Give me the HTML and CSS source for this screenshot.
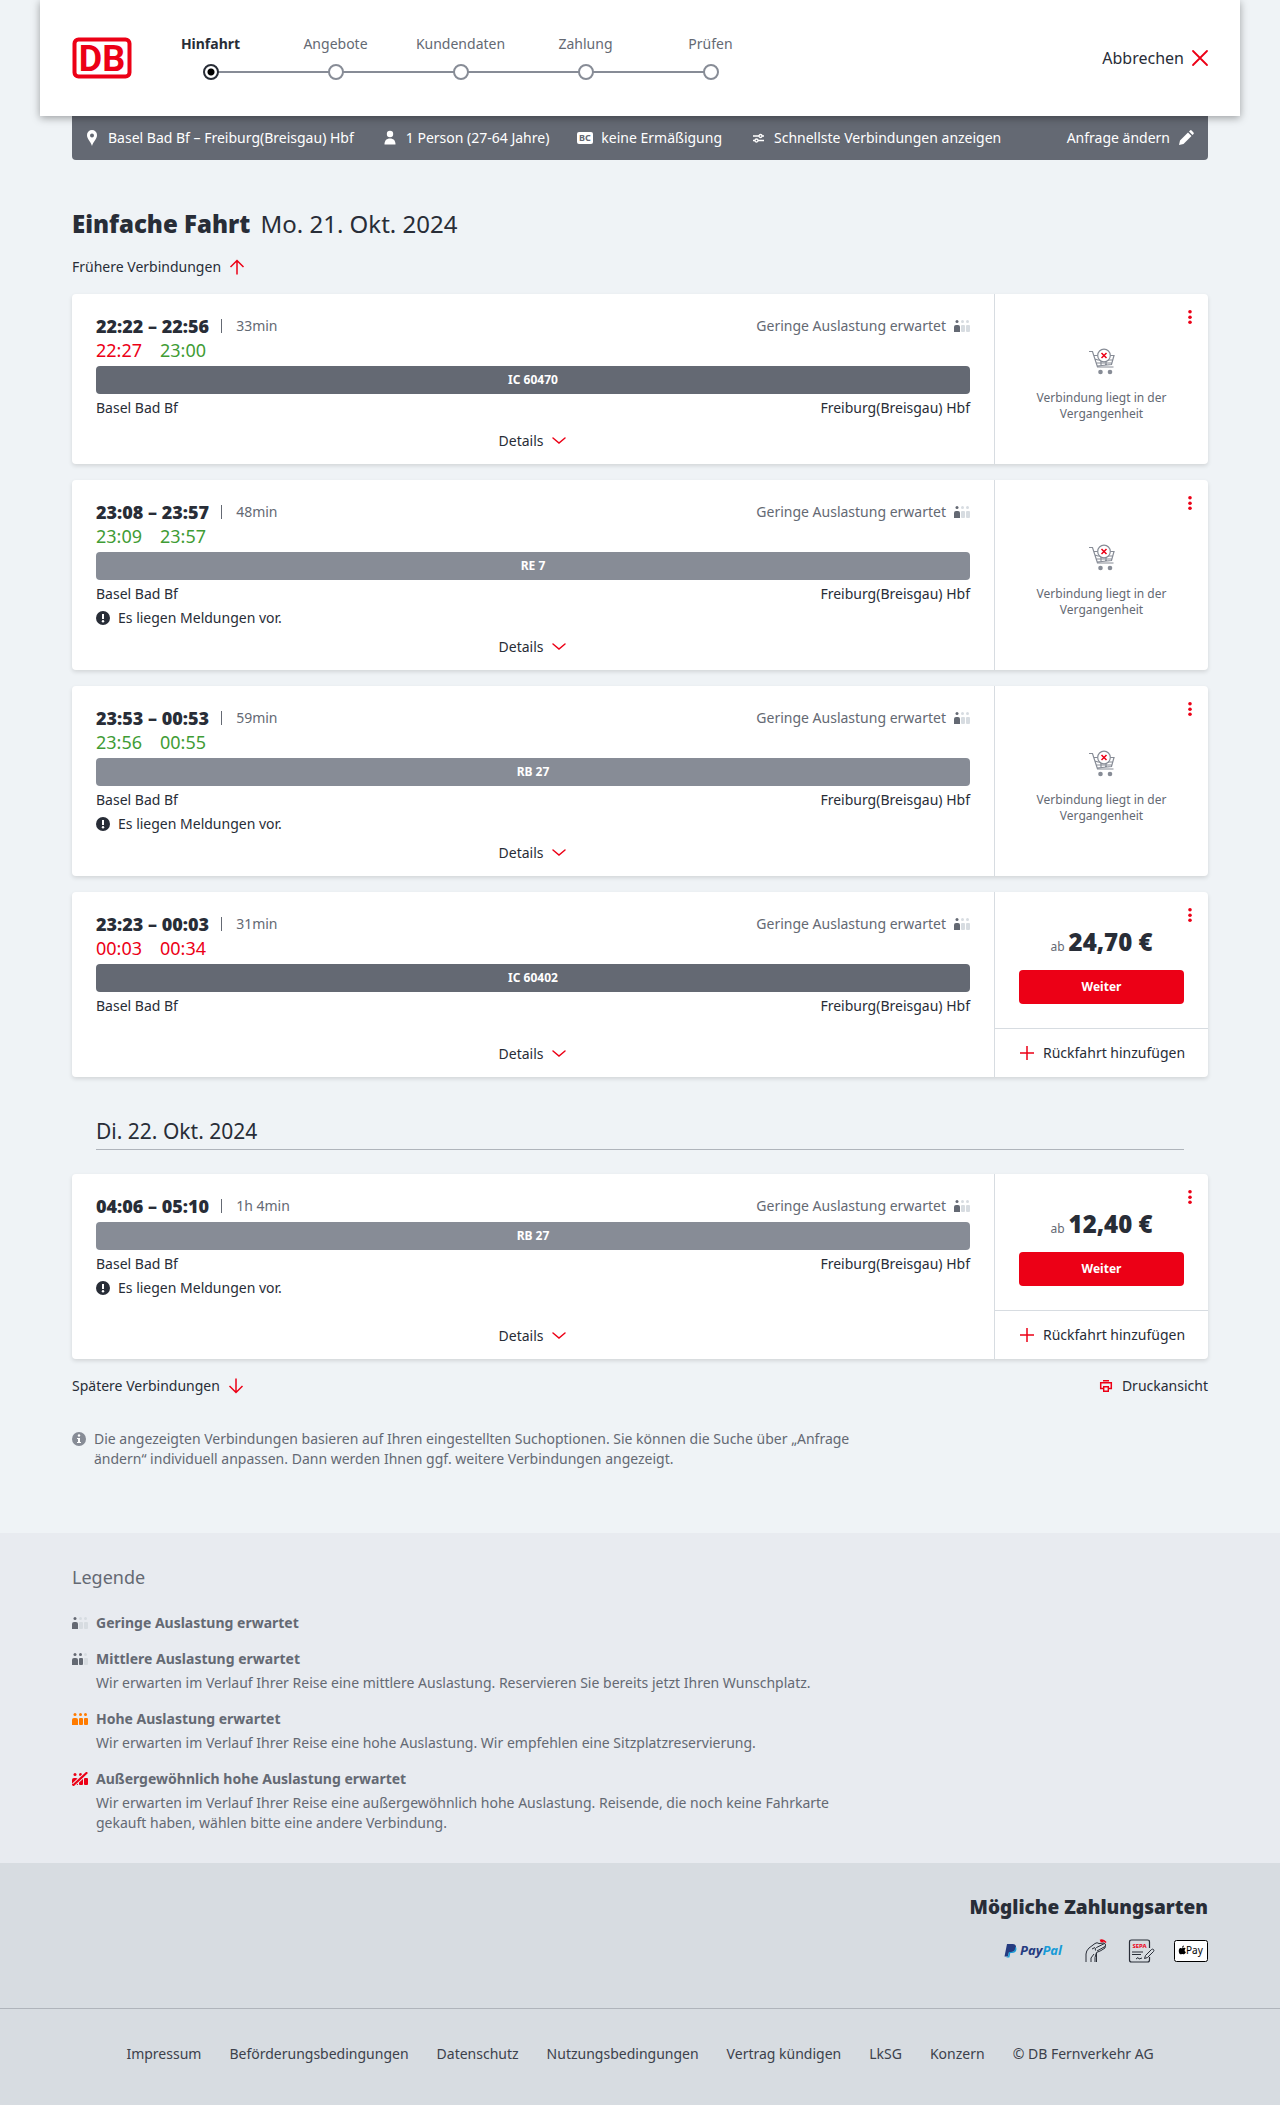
FILE: index.html
```
<!DOCTYPE html>
<html lang="de">
<head>
  <meta charset="UTF-8" />
  <meta name="viewport" content="width=device-width, initial-scale=1.0"/>
  <title>Hinfahrt auswählen</title>
  <link rel="stylesheet" href="styles.css">
</head>
<body>
  <!-- Icons -->
  <svg class="sprite" aria-hidden="true">
    <symbol id="load-low" viewBox="0 0 16 12">
      <g fill="#646973"><circle cx="3" cy="1.5" r="1.5"/><path d="M0 12V7q0-2 2-2h2q2 0 2 2v5z"/></g>
      <g fill="#d7dce1"><circle cx="8.5" cy="1.5" r="1.5"/><circle cx="13.5" cy="1.5" r="1.5"/><rect x="7" y="5" width="4" height="7" rx="1"/><rect x="12" y="5" width="4" height="7" rx="1"/></g>
    </symbol>
    <symbol id="load-mid" viewBox="0 0 16 12">
      <g fill="#646973"><circle cx="3" cy="1.5" r="1.5"/><circle cx="8.5" cy="1.5" r="1.5"/><path d="M0 12V7q0-2 2-2h2q2 0 2 2v5z"/><rect x="7" y="5" width="4" height="7" rx="1"/></g>
      <g fill="#d7dce1"><circle cx="13.5" cy="1.5" r="1.5"/><rect x="12" y="5" width="4" height="7" rx="1"/></g>
    </symbol>
    <symbol id="load-high" viewBox="0 0 16 12">
      <g fill="#ff7b00"><circle cx="3" cy="1.5" r="1.5"/><circle cx="8.5" cy="1.5" r="1.5"/><circle cx="13.5" cy="1.5" r="1.5"/><path d="M0 12V7q0-2 2-2h2q2 0 2 2v5z"/><rect x="7" y="5" width="4" height="7" rx="1"/><rect x="12" y="5" width="4" height="7" rx="1"/></g>
    </symbol>
    <symbol id="load-full" viewBox="0 0 16 14">
      <g fill="#ec0016"><circle cx="3" cy="2.5" r="1.5"/><circle cx="8.5" cy="2.5" r="1.5"/><path d="M0 13V8q0-2 2-2h2q2 0 2 2v5z"/><rect x="7" y="6" width="4" height="7" rx="1"/><rect x="12" y="6" width="4" height="7" rx="1"/></g>
      <path d="M1.500 13L14.500 1" stroke="#e8ebf0" stroke-width="4"/>
      <path d="M1.500 13L14.500 1" stroke="#ec0016" stroke-width="2.200" stroke-linecap="round"/>
    </symbol>
    <symbol id="chevron" viewBox="0 0 16 16"><path d="M2 5l6 5 6-5" fill="none" stroke="#ec0016" stroke-width="1.500" stroke-linecap="round"/></symbol>
    <symbol id="dots" viewBox="0 0 4 14"><g fill="#ec0016"><circle cx="2" cy="1.800" r="1.800"/><circle cx="2" cy="7.300" r="1.800"/><circle cx="2" cy="12.200" r="1.800"/></g></symbol>
    <symbol id="plus" viewBox="0 0 16 16"><path d="M8 1v14M1 8h14" stroke="#ec0016" stroke-width="1.500"/></symbol>
    <symbol id="notice" viewBox="0 0 14 14"><circle cx="7" cy="7" r="7" fill="#282d37"/><path d="M6 3h2v5h-2z" fill="#fff"/><circle cx="7" cy="10.300" r="1.200" fill="#fff"/></symbol>
    <symbol id="cart" viewBox="0 0 28 28">
      <g fill="none" stroke="#878c96" stroke-width="1.200">
        <path d="M1 3.500h3.500l5 15.500h16M6 7.500h20l-2.500 9-14.500 1.500M7 11l3 1h15M8 15h16M13 12v5M18 12v5"/>
      </g>
      <circle cx="12.500" cy="24" r="2.300" fill="#878c96"/><circle cx="22" cy="24" r="2.300" fill="#878c96"/>
      <circle cx="16" cy="7.500" r="6.300" fill="#fff" stroke="#878c96" stroke-width="1.200"/>
      <path d="M13.500 5l5 5M18.500 5l-5 5" stroke="#ec0016" stroke-width="1.500"/>
    </symbol>
  </svg>

  <header class="header">
    <a href="#" class="logo" aria-label="Deutsche Bahn">
      <svg width="60" height="42" viewBox="0 0 60 42">
        <rect x="2.500" y="2.500" width="55" height="37" rx="4" fill="#fff" stroke="#ec0016" stroke-width="4"/>
        <text class="logo-text" x="30" y="34" text-anchor="middle">DB</text>
      </svg>
    </a>
    <ol class="steps">
      <li class="step active">Hinfahrt</li>
      <li class="step">Angebote</li>
      <li class="step">Kundendaten</li>
      <li class="step">Zahlung</li>
      <li class="step">Prüfen</li>
    </ol>
    <button class="cancel">Abbrechen
      <svg width="16" height="16" viewBox="0 0 16 16"><path d="M1 1l14 14M15 1L1 15" stroke="#ec0016" stroke-width="1.800" stroke-linecap="round"/></svg>
    </button>
  </header>

  <div class="container">
    <div class="request">
      <span class="request-item">
        <svg width="16" height="16" viewBox="0 0 16 16"><path d="M8 0a5 5 0 0 1 5 5c0 4-3.500 6-5 11C6.500 11 3 9 3 5a5 5 0 0 1 5-5z" fill="#fff"/><circle cx="8" cy="5.500" r="2" fill="#646973"/></svg>
        Basel Bad Bf – Freiburg(Breisgau) Hbf
      </span>
      <span class="request-item">
        <svg width="16" height="16" viewBox="0 0 16 16"><circle cx="8" cy="4" r="3.200" fill="#fff"/><path d="M2.500 14.500c0-4 2-6 5.500-6s5.500 2 5.500 6z" fill="#fff"/></svg>
        1 Person (27-64 Jahre)
      </span>
      <span class="request-item">
        <svg width="16" height="16" viewBox="0 0 16 16"><rect y="2" width="16" height="12" rx="2" fill="#fff"/><text class="bc-text" x="8" y="11" text-anchor="middle">BC</text></svg>
        keine Ermäßigung
      </span>
      <span class="request-item">
        <svg width="16" height="16" viewBox="0 0 16 16"><path d="M3 6h11M3 10.500h11" stroke="#fff" stroke-width="1.500"/><circle cx="10.500" cy="6" r="1.500" fill="#646973" stroke="#fff" stroke-width="1.300"/><circle cx="6.500" cy="10.500" r="1.500" fill="#646973" stroke="#fff" stroke-width="1.300"/></svg>
        Schnellste Verbindungen anzeigen
      </span>
      <button class="request-edit">Anfrage ändern
        <svg width="16" height="16" viewBox="0 0 16 16"><path d="M1 15l1-4.500 8-8L13.500 6l-8 8zM11 1.500l1-1q.8-.8 1.600 0l1.900 1.900q.8.800 0 1.600l-1 1z" fill="#fff"/></svg>
      </button>
    </div>

    <main>
      <h1 class="title">Einfache Fahrt <span>Mo. 21. Okt. 2024</span></h1>
      <button class="link-button">Frühere Verbindungen
        <svg width="16" height="16" viewBox="0 0 16 16"><path d="M8 15.500V2M1.500 8L8 1.500 14.500 8" fill="none" stroke="#ec0016" stroke-width="1.500"/></svg>
      </button>

      <article class="card">
        <div class="trip">
          <div class="trip-head">
            <strong class="times">22:22 – 22:56</strong>
            <span class="duration">33min</span>
            <span class="load">Geringe Auslastung erwartet <svg width="16" height="12"><use href="#load-low"/></svg></span>
          </div>
          <div class="realtime"><span class="late">22:27</span><span>23:00</span></div>
          <div class="train ic">IC 60470</div>
          <div class="stations"><span>Basel Bad Bf</span><span>Freiburg(Breisgau) Hbf</span></div>
          <button class="details">Details <svg width="16" height="16"><use href="#chevron"/></svg></button>
        </div>
        <div class="offer">
          <button class="more" aria-label="Mehr"><svg width="4" height="14"><use href="#dots"/></svg></button>
          <div class="past">
            <svg width="28" height="28"><use href="#cart"/></svg>
            <p>Verbindung liegt in der Vergangenheit</p>
          </div>
        </div>
      </article>

      <article class="card">
        <div class="trip">
          <div class="trip-head">
            <strong class="times">23:08 – 23:57</strong>
            <span class="duration">48min</span>
            <span class="load">Geringe Auslastung erwartet <svg width="16" height="12"><use href="#load-low"/></svg></span>
          </div>
          <div class="realtime"><span>23:09</span><span>23:57</span></div>
          <div class="train">RE 7</div>
          <div class="stations"><span>Basel Bad Bf</span><span>Freiburg(Breisgau) Hbf</span></div>
          <div class="message"><svg width="14" height="14"><use href="#notice"/></svg>Es liegen Meldungen vor.</div>
          <button class="details">Details <svg width="16" height="16"><use href="#chevron"/></svg></button>
        </div>
        <div class="offer">
          <button class="more" aria-label="Mehr"><svg width="4" height="14"><use href="#dots"/></svg></button>
          <div class="past">
            <svg width="28" height="28"><use href="#cart"/></svg>
            <p>Verbindung liegt in der Vergangenheit</p>
          </div>
        </div>
      </article>

      <article class="card">
        <div class="trip">
          <div class="trip-head">
            <strong class="times">23:53 – 00:53</strong>
            <span class="duration">59min</span>
            <span class="load">Geringe Auslastung erwartet <svg width="16" height="12"><use href="#load-low"/></svg></span>
          </div>
          <div class="realtime"><span>23:56</span><span>00:55</span></div>
          <div class="train">RB 27</div>
          <div class="stations"><span>Basel Bad Bf</span><span>Freiburg(Breisgau) Hbf</span></div>
          <div class="message"><svg width="14" height="14"><use href="#notice"/></svg>Es liegen Meldungen vor.</div>
          <button class="details">Details <svg width="16" height="16"><use href="#chevron"/></svg></button>
        </div>
        <div class="offer">
          <button class="more" aria-label="Mehr"><svg width="4" height="14"><use href="#dots"/></svg></button>
          <div class="past">
            <svg width="28" height="28"><use href="#cart"/></svg>
            <p>Verbindung liegt in der Vergangenheit</p>
          </div>
        </div>
      </article>

      <article class="card">
        <div class="trip">
          <div class="trip-head">
            <strong class="times">23:23 – 00:03</strong>
            <span class="duration">31min</span>
            <span class="load">Geringe Auslastung erwartet <svg width="16" height="12"><use href="#load-low"/></svg></span>
          </div>
          <div class="realtime"><span class="late">00:03</span><span class="late">00:34</span></div>
          <div class="train ic">IC 60402</div>
          <div class="stations"><span>Basel Bad Bf</span><span>Freiburg(Breisgau) Hbf</span></div>
          <button class="details">Details <svg width="16" height="16"><use href="#chevron"/></svg></button>
        </div>
        <div class="offer">
          <button class="more" aria-label="Mehr"><svg width="4" height="14"><use href="#dots"/></svg></button>
          <div class="booking">
            <p class="price"><small>ab</small>24,70 €</p>
            <button class="next">Weiter</button>
          </div>
          <button class="return"><svg width="16" height="16"><use href="#plus"/></svg>Rückfahrt hinzufügen</button>
        </div>
      </article>

      <h2 class="day">Di. 22. Okt. 2024</h2>

      <article class="card">
        <div class="trip">
          <div class="trip-head">
            <strong class="times">04:06 – 05:10</strong>
            <span class="duration">1h 4min</span>
            <span class="load">Geringe Auslastung erwartet <svg width="16" height="12"><use href="#load-low"/></svg></span>
          </div>
          <div class="train">RB 27</div>
          <div class="stations"><span>Basel Bad Bf</span><span>Freiburg(Breisgau) Hbf</span></div>
          <div class="message"><svg width="14" height="14"><use href="#notice"/></svg>Es liegen Meldungen vor.</div>
          <button class="details">Details <svg width="16" height="16"><use href="#chevron"/></svg></button>
        </div>
        <div class="offer">
          <button class="more" aria-label="Mehr"><svg width="4" height="14"><use href="#dots"/></svg></button>
          <div class="booking">
            <p class="price"><small>ab</small>12,40 €</p>
            <button class="next">Weiter</button>
          </div>
          <button class="return"><svg width="16" height="16"><use href="#plus"/></svg>Rückfahrt hinzufügen</button>
        </div>
      </article>

      <div class="list-actions">
        <button class="link-button">Spätere Verbindungen
          <svg width="16" height="16" viewBox="0 0 16 16"><path d="M8 .5V14M1.500 8L8 14.500 14.500 8" fill="none" stroke="#ec0016" stroke-width="1.500"/></svg>
        </button>
        <button class="link-button">
          <svg width="16" height="16" viewBox="0 0 16 16"><path d="M5 10.500H2.700V4.700h10.600v5.800H11M5 2.700h6" fill="none" stroke="#ec0016" stroke-width="1.500"/><path d="M5.700 8.700h4.600v4.600H5.700z" fill="none" stroke="#ec0016" stroke-width="1.400"/></svg>
          Druckansicht
        </button>
      </div>

      <div class="info">
        <svg width="14" height="14" viewBox="0 0 14 14"><circle cx="7" cy="7" r="7" fill="#878c96"/><circle cx="7" cy="3.500" r="1.200" fill="#fff"/><path d="M5 6h3v4h1v1H5v-1h1V7H5z" fill="#fff"/></svg>
        <p>Die angezeigten Verbindungen basieren auf Ihren eingestellten Suchoptionen. Sie können die Suche über „Anfrage ändern“ individuell anpassen. Dann werden Ihnen ggf. weitere Verbindungen angezeigt.</p>
      </div>
    </main>
  </div>

  <section class="legend">
    <h2>Legende</h2>
    <dl>
      <dt><svg width="16" height="12"><use href="#load-low"/></svg>Geringe Auslastung erwartet</dt>
      <dt><svg width="16" height="12"><use href="#load-mid"/></svg>Mittlere Auslastung erwartet</dt>
      <dd>Wir erwarten im Verlauf Ihrer Reise eine mittlere Auslastung. Reservieren Sie bereits jetzt Ihren Wunschplatz.</dd>
      <dt><svg width="16" height="12"><use href="#load-high"/></svg>Hohe Auslastung erwartet</dt>
      <dd>Wir erwarten im Verlauf Ihrer Reise eine hohe Auslastung. Wir empfehlen eine Sitzplatzreservierung.</dd>
      <dt><svg width="16" height="14"><use href="#load-full"/></svg>Außergewöhnlich hohe Auslastung erwartet</dt>
      <dd>Wir erwarten im Verlauf Ihrer Reise eine außergewöhnlich hohe Auslastung. Reisende, die noch keine Fahrkarte gekauft haben, wählen bitte eine andere Verbindung.</dd>
    </dl>
  </section>

  <footer class="footer">
    <div class="payment">
      <h2>Mögliche Zahlungsarten</h2>
      <div class="payment-icons">
        <svg width="60" height="16" viewBox="0 0 60 16">
          <path d="M3 1h5.500q4 0 3.500 4t-5 4H5L4 13.500H.5z" fill="#253b80"/>
          <path d="M11.500 3.500q1.300 1 .9 3.200-.8 3.300-4.600 3.300h-1.500l-.9 4.500H2.500l.2-1H4L5 9h2q4 0 4.500-5.500z" fill="#179bd7"/>
          <text class="paypal-text" x="16" y="12"><tspan fill="#253b80">Pay</tspan><tspan fill="#179bd7">Pal</tspan></text>
        </svg>
        <svg width="24" height="24" viewBox="0 0 24 24">
          <g fill="none" stroke="#282d37" stroke-width="1"><path d="M2 23v-8q0-3 3-6l6-4.500q2-1.500 4 0l5-.5q1.500.5 1.500 2l-.5 3q-4 3-8.500 4.500l-1.500 5v4.500M7 23v-4l3-4M8 10l3-1.500M11.500 11.500q-1-2 1-3l8-4M13 12l8-4.500M12.500 14v9"/></g>
          <path d="M16 1.500q3-1.500 6 2M16.500 2.500h3" fill="none" stroke="#ec0016" stroke-width="1.500"/>
        </svg>
        <svg width="26" height="24" viewBox="0 0 26 24">
          <path d="M21.500 9V3q0-2-2-2h-16q-2 0-2 2v18q0 2 2 2h16q2 0 2-2v-3" fill="none" stroke="#282d37" stroke-width="1.200"/>
          <text class="sepa-text" x="11.500" y="9" text-anchor="middle">SEPA</text>
          <path d="M4 13h11M4 15.500h9M8 20l2-1.500 1 1.500 3-1" fill="none" stroke="#282d37" stroke-width="1"/>
          <path d="M16.500 19.500l1-3 6-6q1.200-.8 2 0t0 2l-6 6z" fill="#d7dce1" stroke="#282d37" stroke-width="1"/>
        </svg>
        <svg width="34" height="22" viewBox="0 0 34 22">
          <rect x=".5" y=".5" width="33" height="21" rx="2" fill="#fff" stroke="#000"/>
          <path d="M8 8.200c.8 0 1.300-.6 2.200-.5.600 0 1.100.3 1.400.7-1.500 1-1.200 3 .3 3.700-.5 1.300-1.200 2.200-2 2.200-.7 0-1-.4-1.800-.4s-1.100.4-1.800.4C4.800 14 4 9.500 6 8.100c.8-.5 1.300.1 2 .1zM8 7.700c0-1.200.8-2 1.900-2.200.1 1.200-.8 2.200-1.900 2.200z" fill="#000"/>
          <text class="apple-text" x="12" y="14">Pay</text>
        </svg>
      </div>
    </div>
    <nav class="footer-links">
      <a href="#">Impressum</a>
      <a href="#">Beförderungsbedingungen</a>
      <a href="#">Datenschutz</a>
      <a href="#">Nutzungsbedingungen</a>
      <a href="#">Vertrag kündigen</a>
      <a href="#">LkSG</a>
      <a href="#">Konzern</a>
      <span>© DB Fernverkehr AG</span>
    </nav>
  </footer>
</body>
</html>
```
FILE: styles.css
```
*, *::before, *::after {
  box-sizing: border-box;
}

body {
  margin: 0;
  font-family: "Noto Sans", "Open Sans", sans-serif;
  font-size: 14px;
  line-height: 20px;
  color: #282d37;
  background-color: #eff3f6;
}

h1, h2, p, ol, dl, dd {
  margin: 0;
  padding: 0;
}

button {
  font: inherit;
  color: inherit;
  background: none;
  border: none;
  padding: 0;
  cursor: pointer;
}

a {
  color: inherit;
  text-decoration: none;
}

svg {
  flex-shrink: 0;
  overflow: visible;
}

.sprite {
  display: none;
}

/* Header */
.header {
  position: relative;
  display: flex;
  align-items: center;
  max-width: 1200px;
  height: 116px;
  margin: 0 auto;
  padding: 0 32px;
  background-color: white;
  box-shadow: 0 2px 8px rgba(0,0,0,0.35);
}

.logo svg {
  display: block;
}

.logo-text {
  font-family: "Liberation Sans Narrow", "Roboto", sans-serif;
  font-size: 36px;
  font-weight: bold;
  fill: #ec0016;
}

.steps {
  display: flex;
  list-style: none;
  margin: 0 0 2px 16px;
}

.step {
  position: relative;
  width: 125px;
  text-align: center;
  color: #646973;
  padding-bottom: 26px;
}

.step::before {
  content: "";
  position: absolute;
  left: 50%;
  bottom: 7px;
  width: 100%;
  height: 2px;
  background-color: #878c96;
}

.step:last-child::before {
  display: none;
}

.step::after {
  content: "";
  position: absolute;
  left: calc(50% - 8px);
  bottom: 0;
  width: 16px;
  height: 16px;
  border: 2px solid #878c96;
  border-radius: 50%;
  background-color: white;
}

.step.active {
  color: #282d37;
  font-weight: bold;
}

.step.active::after {
  border-color: #282d37;
  background: radial-gradient(circle, black 3px, white 4px);
}

.cancel {
  display: flex;
  align-items: center;
  gap: 8px;
  margin-left: auto;
  font-size: 16px;
}

/* Search request */
.container {
  max-width: 1200px;
  margin: 0 auto;
  padding: 0 32px;
}

.request {
  display: flex;
  align-items: center;
  gap: 28px;
  height: 44px;
  padding: 0 14px 0 12px;
  color: white;
  background-color: #646973;
  border-radius: 0 0 4px 4px;
}

.request-item,
.request-edit {
  display: flex;
  align-items: center;
  gap: 8px;
}

.request-edit {
  margin-left: auto;
}

.bc-text {
  font-size: 9px;
  font-weight: bold;
  fill: #646973;
}

.title {
  margin: 48px 0 16px;
  font-size: 24px;
  line-height: 32px;
  font-weight: 900;
}

.title span {
  font-weight: normal;
  margin-left: 4px;
}

.link-button {
  display: flex;
  align-items: center;
  gap: 8px;
  height: 22px;
}

/* Connections */
.card {
  display: grid;
  grid-template-columns: 1fr 214px;
  min-height: 170px;
  margin-top: 16px;
  background-color: white;
  border-radius: 4px;
  box-shadow: 0 2px 4px rgba(0,0,0,0.12);
}

.trip {
  display: flex;
  flex-direction: column;
  padding: 20px 24px 13px;
}

.trip-head {
  display: flex;
  align-items: center;
  height: 24px;
}

.times {
  font-size: 18px;
  font-weight: 900;
}

.duration {
  display: flex;
  align-items: center;
  margin-left: 12px;
  color: #646973;
}

.duration::before {
  content: "";
  width: 1px;
  height: 14px;
  margin-right: 14px;
  background-color: #646973;
}

.load {
  display: flex;
  align-items: center;
  gap: 8px;
  margin-left: auto;
  color: #646973;
}

.realtime {
  display: flex;
  gap: 18px;
  font-size: 18px;
  line-height: 24px;
  color: #3f9c35;
}

.late {
  color: #ec0016;
}

.train {
  margin-top: 4px;
  font-size: 12px;
  line-height: 28px;
  font-weight: bold;
  text-align: center;
  color: white;
  background-color: #878c96;
  border-radius: 4px;
}

.train.ic {
  background-color: #646973;
}

.stations {
  display: flex;
  justify-content: space-between;
  margin-top: 4px;
}

.message {
  display: flex;
  align-items: center;
  gap: 8px;
  margin-top: 4px;
}

.details {
  display: flex;
  align-items: center;
  align-self: center;
  gap: 8px;
  margin-top: auto;
  padding-top: 9px;
}

.offer {
  position: relative;
  display: flex;
  flex-direction: column;
  border-left: 1px solid #d7dce1;
}

.more {
  position: absolute;
  top: 16px;
  right: 16px;
  display: flex;
}

.past {
  display: flex;
  flex-direction: column;
  align-items: center;
  justify-content: center;
  gap: 14px;
  flex: 1;
  padding: 12px 32px 0;
  font-size: 12px;
  line-height: 16px;
  text-align: center;
  color: #646973;
}

.booking {
  flex: 1;
  padding: 34px 24px 24px;
  text-align: center;
}

.price {
  font-size: 24px;
  line-height: 32px;
  font-weight: 900;
}

.price small {
  margin-right: 4px;
  font-size: 12px;
  line-height: 16px;
  font-weight: normal;
  color: #646973;
}

.next {
  width: 100%;
  height: 34px;
  margin-top: 12px;
  font-size: 12px;
  line-height: 16px;
  font-weight: bold;
  color: white;
  background-color: #ec0016;
  border-radius: 4px;
}

.next:hover {
  background-color: #c50014;
}

.return {
  display: flex;
  align-items: center;
  gap: 8px;
  height: 49px;
  padding-left: 24px;
  white-space: nowrap;
  border-top: 1px solid #d7dce1;
}

.day {
  margin: 40px 24px 24px;
  padding-bottom: 4px;
  font-size: 21px;
  line-height: 28px;
  font-weight: normal;
  border-bottom: 1px solid #afb4bb;
}

.day + .card {
  margin-top: 0;
}

.list-actions {
  display: flex;
  justify-content: space-between;
  margin-top: 16px;
}

.info {
  display: flex;
  gap: 8px;
  max-width: 784px;
  margin-top: 32px;
  padding-bottom: 64px;
  color: #646973;
}

.info svg {
  margin-top: 3px;
}

/* Legend */
.legend {
  padding: 32px 72px 30px;
  color: #646973;
  background-color: #e8ebf0;
}

.legend h2 {
  font-size: 18px;
  line-height: 24px;
  font-weight: normal;
}

.legend dl {
  max-width: 784px;
  margin-top: 24px;
}

.legend dt {
  display: flex;
  align-items: center;
  gap: 8px;
  margin-top: 16px;
  font-weight: bold;
}

.legend dd {
  margin-top: 4px;
  padding-left: 24px;
}

/* Footer */
.footer {
  background-color: #d7dce1;
}

.payment {
  display: flex;
  flex-direction: column;
  align-items: flex-end;
  padding: 30px 72px 45px;
}

.payment h2 {
  font-size: 19px;
  line-height: 28px;
  font-weight: 900;
}

.payment-icons {
  display: flex;
  align-items: center;
  gap: 20px;
  margin-top: 18px;
}

.paypal-text {
  font-size: 13px;
  font-weight: bold;
  font-style: italic;
}

.sepa-text {
  font-size: 6px;
  font-weight: bold;
  fill: #ec0016;
}

.apple-text {
  font-size: 10px;
}

.footer-links {
  display: flex;
  justify-content: center;
  gap: 28px;
  padding: 35px 0 41px;
  color: #3c414b;
  border-top: 1px solid #afb4bb;
}
```
